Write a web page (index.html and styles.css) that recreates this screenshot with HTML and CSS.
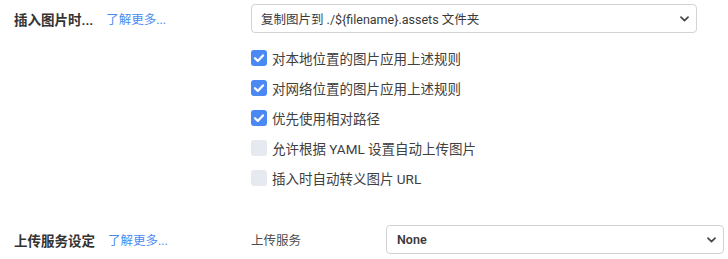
FILE: index.html
```html
<!DOCTYPE html>
<html lang="zh-CN">
<head>
<meta charset="utf-8">
<title>图片设置</title>
<link rel="stylesheet" href="styles.css">
</head>
<body>
<div class="page">
  <section class="group">
    <div class="head">
      <span class="title">插入图片时...</span>
      <a class="more" href="#">了解更多...</a>
    </div>
    <div class="body">
      <div class="select select-wide">
        <span class="select-text">复制图片到 ./${filename}.assets 文件夹</span>
        <svg class="chev" width="9" height="6" viewBox="0 0 9 6"><path d="M1 1.2 L4.5 4.6 L8 1.2" fill="none" stroke="#4a4a4a" stroke-width="1.8" stroke-linecap="round" stroke-linejoin="round"/></svg>
      </div>
      <ul class="checks">
        <li class="check"><span class="box on"><svg width="16" height="16" viewBox="0 0 16 16"><path d="M4 8.2 L6.8 10.9 L12 5.4" fill="none" stroke="#fff" stroke-width="2.2" stroke-linecap="round" stroke-linejoin="round"/></svg></span><span>对本地位置的图片应用上述规则</span></li>
        <li class="check"><span class="box on"><svg width="16" height="16" viewBox="0 0 16 16"><path d="M4 8.2 L6.8 10.9 L12 5.4" fill="none" stroke="#fff" stroke-width="2.2" stroke-linecap="round" stroke-linejoin="round"/></svg></span><span>对网络位置的图片应用上述规则</span></li>
        <li class="check"><span class="box on"><svg width="16" height="16" viewBox="0 0 16 16"><path d="M4 8.2 L6.8 10.9 L12 5.4" fill="none" stroke="#fff" stroke-width="2.2" stroke-linecap="round" stroke-linejoin="round"/></svg></span><span>优先使用相对路径</span></li>
        <li class="check"><span class="box"></span><span>允许根据 YAML 设置自动上传图片</span></li>
        <li class="check"><span class="box"></span><span>插入时自动转义图片 URL</span></li>
      </ul>
    </div>
  </section>
  <section class="group group-upload">
    <div class="head">
      <span class="title">上传服务设定</span>
      <a class="more" href="#">了解更多...</a>
    </div>
    <div class="body body-row">
      <span class="field-label">上传服务</span>
      <div class="select select-narrow">
        <span class="select-text strong">None</span>
        <svg class="chev" width="9" height="6" viewBox="0 0 9 6"><path d="M1 1.2 L4.5 4.6 L8 1.2" fill="none" stroke="#4a4a4a" stroke-width="1.8" stroke-linecap="round" stroke-linejoin="round"/></svg>
      </div>
    </div>
  </section>
</div>
</body>
</html>
```

FILE: styles.css
```css
html, body {
  margin: 0;
  padding: 0;
  background: #ffffff;
}

body {
  font-family: Roboto, "Noto Sans CJK SC", "Noto Sans", sans-serif;
  color: #333333;
}

.page {
  padding: 4px 0 0 14px;
}

.group {
  display: flex;
  align-items: flex-start;
}

.group-upload {
  margin-top: 32px;
}

.head {
  width: 237px;
  height: 29px;
  display: flex;
  align-items: center;
  flex-shrink: 0;
}

.title {
  font-size: 13.5px;
  font-weight: 700;
  color: #333333;
}

.more {
  margin-left: 13px;
  font-size: 12.5px;
  color: #4a8af4;
  text-decoration: none;
}

.body {
  display: flex;
  flex-direction: column;
}

.body-row {
  flex-direction: row;
  align-items: center;
}

.select {
  box-sizing: border-box;
  height: 29px;
  border: 1px solid #d3d3d3;
  border-radius: 4px;
  background: #ffffff;
  display: flex;
  align-items: center;
  justify-content: space-between;
  padding: 0 7px 0 9px;
}

.select-wide {
  width: 446px;
}

.select-narrow {
  width: 338px;
  padding-left: 10px;
}

.select-text {
  font-size: 12.5px;
  color: #3a3a3a;
}

.strong {
  font-weight: 600;
}

.chev {
  display: block;
}

.checks {
  list-style: none;
  margin: 10px 0 0 0;
  padding: 0;
}

.check {
  height: 30px;
  display: flex;
  align-items: center;
  font-size: 13.5px;
  color: #404040;
}

.box {
  box-sizing: border-box;
  width: 16px;
  height: 16px;
  border-radius: 3px;
  background: #e6e9ef;
  margin-right: 5px;
  flex-shrink: 0;
  display: flex;
}

.box.on {
  background: #4a89f3;
}

.field-label {
  width: 135px;
  font-size: 12.5px;
  color: #4d4d4d;
}
```
